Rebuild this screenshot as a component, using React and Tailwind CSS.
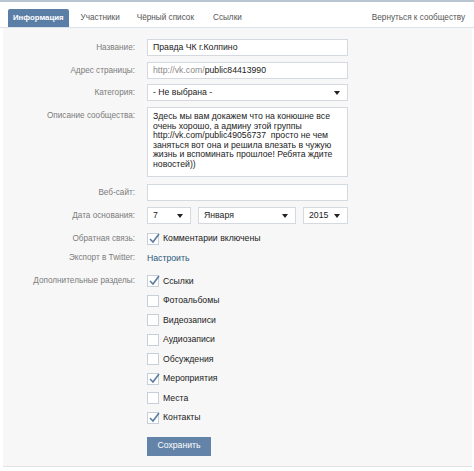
import React from "react";

const font = { fontFamily: '"Liberation Sans", Arial, sans-serif' };

function Field({ label, children, className = "" }) {
  return (
    <div className={`flex items-start ${className}`}>
      <div className="w-[132px] shrink-0 text-right text-[8.2px] leading-[17px] text-[#7c7c7c]">{label}</div>
      <div className="ml-[12px]">{children}</div>
    </div>
  );
}

function Arrow() {
  return <span className="inline-block h-0 w-0 border-x-[3.5px] border-t-[4px] border-x-transparent border-t-[#222]" />;
}

function Select({ value, w }) {
  return (
    <div className={`flex h-[17px] items-center justify-between border border-[#d3d9de] bg-white pl-[5px] pr-[7px] text-[8.7px] text-[#222] ${w}`}>
      <span>{value}</span>
      <Arrow />
    </div>
  );
}

function Check({ on }) {
  return (
    <span className="relative inline-block h-[12px] w-[12px] shrink-0 border border-[#c7cfd8] bg-white">
      {on && (
        <svg className="absolute -top-[1px] left-[0px]" width="12" height="11" viewBox="0 0 12 11">
          <path d="M2 6 L5 9 L11 1" fill="none" stroke="#5a7ca3" strokeWidth="1.6" />
        </svg>
      )}
    </span>
  );
}

function CheckRow({ label, text, on, className = "" }) {
  return (
    <div className={`flex h-[19.5px] items-center ${className}`}>
      <div className="w-[132px] shrink-0 text-right text-[8.2px] text-[#7c7c7c]">{label}</div>
      <div className="ml-[12px] flex items-center gap-[4px] text-[8.7px] text-[#222]">
        <Check on={on} />
        <span>{text}</span>
      </div>
    </div>
  );
}

export default function App() {
  const sections = [
    ["Дополнительные разделы:", "Ссылки", true],
    ["", "Фотоальбомы", false],
    ["", "Видеозаписи", false],
    ["", "Аудиозаписи", false],
    ["", "Обсуждения", false],
    ["", "Мероприятия", true],
    ["", "Места", false],
    ["", "Контакты", true],
  ];

  return (
    <div className="h-[471px] w-[474px] bg-white" style={font}>
      <div className="h-[2px] bg-[#b8c5d3]" />
      <div className="flex h-[26px] items-end border-b border-[#dbe2e9] pl-[8px] pr-[9px] text-[8.2px]">
        <div className="flex h-[18px] items-center rounded-t-[2px] bg-[#5b7ea6] px-[5px] text-[7.8px] font-bold text-white">Информация</div>
        <div className="flex h-[18px] items-center pl-[12px] text-[#555]">Участники</div>
        <div className="flex h-[18px] items-center pl-[17px] text-[#555]">Чёрный список</div>
        <div className="flex h-[18px] items-center pl-[19px] text-[#555]">Ссылки</div>
        <div className="ml-auto flex h-[18px] items-center text-[#555]">Вернуться к сообществу</div>
      </div>

      <div className="ml-[3px] mr-[2px] h-[439px] border-b border-[#e2e2e2] bg-[#f7f7f7] pt-[11px]">
        <Field label="Название:">
          <div className="flex h-[17px] w-[201px] items-center border border-[#d3d9de] bg-white px-[5px] text-[8.7px] text-[#222]">Правда ЧК г.Колпино</div>
        </Field>
        <Field label="Адрес страницы:" className="mt-[6px]">
          <div className="flex h-[17px] w-[201px] items-center border border-[#d3d9de] bg-white px-[5px] text-[8.7px]">
            <span className="text-[#8a8a8a]">http://vk.com/</span>
            <span className="text-[#222]">public84413990</span>
          </div>
        </Field>
        <Field label="Категория:" className="mt-[5px]">
          <Select value="- Не выбрана -" w="w-[201px]" />
        </Field>
        <Field label="Описание сообщества:" className="mt-[6px]">
          <div className="h-[70px] w-[201px] border border-[#d3d9de] bg-white px-[5px] pt-[4px] text-[8.7px] leading-[9.5px] text-[#222]">
            Здесь мы вам докажем что на конюшне все очень хорошо, а админу этой группы http://vk.com/public49056737&nbsp; просто не чем заняться вот она и решила влезать в чужую жизнь и вспоминать прошлое! Ребята ждите новостей))
          </div>
        </Field>
        <Field label="Веб-сайт:" className="mt-[7px]">
          <div className="h-[17px] w-[201px] border border-[#d3d9de] bg-white" />
        </Field>
        <Field label="Дата основания:" className="mt-[6px]">
          <div className="flex gap-[7px]">
            <Select value="7" w="w-[44px]" />
            <Select value="Января" w="w-[98px]" />
            <Select value="2015" w="w-[45px]" />
          </div>
        </Field>

        <CheckRow label="Обратная связь:" text="Комментарии включены" on className="mt-[5px]" />
        <div className="flex h-[19.5px] items-center">
          <div className="w-[132px] shrink-0 text-right text-[8.2px] text-[#7c7c7c]">Экспорт в Twitter:</div>
          <div className="ml-[12px] text-[8.7px] text-[#2b587a]">Настроить</div>
        </div>

        {sections.map(([label, text, on], i) => (
          <CheckRow key={text} label={label} text={text} on={on} className={i === 0 ? "mt-[3.5px]" : ""} />
        ))}

        <div className="ml-[144px] mt-[9px] flex h-[19px] w-[64px] items-center justify-center bg-[#6383a8] text-[8.7px] text-white">Сохранить</div>
      </div>
    </div>
  );
}
